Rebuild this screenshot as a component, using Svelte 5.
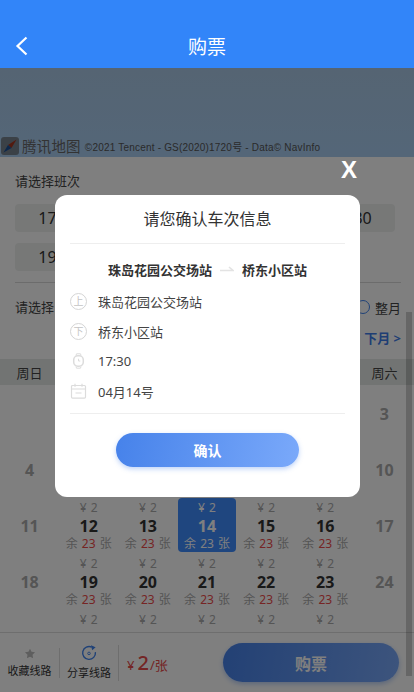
<script>
	const times = ['17:30', '18:00', '18:30', '18:30', '19:30'];
	const rows = [
		[null, null, null, null, 1, 2, 3],
		[4, 5, 6, 7, 8, 9, 10],
		[11, 12, 13, 14, 15, 16, 17],
		[18, 19, 20, 21, 22, 23, 24],
		[25, 26, 27, 28, 29, 30, null]
	];
	const weekdays = ['周日', '周一', '周二', '周三', '周四', '周五', '周六'];
	const isWeekend = (i) => i === 0 || i === 6;
</script>

<div class="page">
	<header class="top">
		<svg class="back" width="14" height="20" viewBox="0 0 14 20">
			<path d="M11.5 1.5 L2.5 10 L11.5 18.5" fill="none" stroke="#fff" stroke-width="2.2" />
		</svg>
		<h1>购票</h1>
	</header>

	<div class="map">
		<div class="map-logo">
			<svg width="18" height="18" viewBox="0 0 18 18">
				<rect width="18" height="18" rx="3" fill="#76838f" />
				<path d="M15.5 2.5 L10.5 11 L7 8 Z" fill="#a5341f" />
				<path d="M2.5 15.5 L7 8 L10.5 11 Z" fill="#1c4f94" />
			</svg>
			<span class="map-name">腾讯地图</span>
		</div>
		<span class="map-copy">©2021 Tencent - GS(2020)1720号 - Data© NavInfo</span>
	</div>

	<main class="content">
		<div class="section">
			<div class="label">请选择班次</div>
			<div class="times">
				{#each times as t}
					<div class="time">{t}</div>
				{/each}
			</div>
		</div>

		<div class="section date-head">
			<div class="date-row">
				<span class="label">请选择日期</span>
				<span class="month-check"><i class="radio"></i>整月</span>
			</div>
			<div class="next">下月 &gt;</div>
		</div>

		<div class="weekdays">
			{#each weekdays as w}
				<span>{w}</span>
			{/each}
		</div>

		<div class="calendar">
			{#each rows as row}
				{#each row as d, i}
					<div class="day" class:active={d === 14} class:rest={d && isWeekend(i)}>
						{#if d && !isWeekend(i)}
							<span class="price">¥ 2</span>
							<span class="num">{d}</span>
							<span class="left">余 <b>23</b> 张</span>
						{:else if d}
							<span class="num off">{d}</span>
						{/if}
					</div>
				{/each}
			{/each}
		</div>
	</main>

	<footer class="bar">
		<div class="tool tool-fav">
			<svg width="14" height="14" viewBox="0 0 24 24">
				<path d="M12 1.5 L15.4 8.4 L23 9.5 L17.5 14.9 L18.8 22.5 L12 18.9 L5.2 22.5 L6.5 14.9 L1 9.5 L8.6 8.4 Z" fill="#bdbdbd" />
			</svg>
			<span>收藏线路</span>
		</div>
		<div class="tool tool-share">
			<svg width="16" height="16" viewBox="0 0 16 16">
				<path d="M10.8 2.2 A6.4 6.4 0 1 0 14.4 7.2" fill="none" stroke="#3f83ee" stroke-width="1.4" />
				<circle cx="8" cy="8.4" r="1.3" fill="none" stroke="#3f83ee" stroke-width="0.9" />
				<path d="M10 0.3 L14.6 2.2 L11.2 5.2 Z" fill="#3f83ee" />
			</svg>
			<span>分享线路</span>
		</div>
		<div class="cost"><small>¥</small><strong>2</strong><em>/张</em></div>
		<button class="buy">购票</button>
	</footer>

	<div class="scrollbar"></div>

	<div class="mask">
		<span class="close">X</span>
		<div class="modal">
			<h2>请您确认车次信息</h2>
			<div class="route">
				<span>珠岛花园公交场站</span>
				<svg width="14" height="8" viewBox="0 0 14 8">
					<path d="M0 5.5 H13 L9 2" fill="none" stroke="#e3e3e3" stroke-width="1.6" />
				</svg>
				<span>桥东小区站</span>
			</div>
			<ul class="info">
				<li><i class="ring">上</i>珠岛花园公交场站</li>
				<li><i class="ring">下</i>桥东小区站</li>
				<li>
					<svg class="ico" width="16" height="16" viewBox="0 0 16 16" fill="none" stroke="#dcdcdc">
						<rect x="3.2" y="2.8" width="9.6" height="10.4" rx="4.2" stroke-width="1.5" />
						<path d="M5.5 2.5 L6 0.8 H10 L10.5 2.5 M5.5 13.5 L6 15.2 H10 L10.5 13.5" stroke-width="1" />
						<path d="M8 5.8 V8 H9.8" stroke-width="1" />
					</svg>
					17:30
				</li>
				<li>
					<svg class="ico" width="16" height="16" viewBox="0 0 16 16" fill="none" stroke="#dcdcdc" stroke-width="1.2">
						<rect x="1" y="2.5" width="14" height="12.6" rx="1" />
						<path d="M1 6 H15 M4.5 0.8 V3.8 M11.5 0.8 V3.8 M5 10 H11" />
					</svg>
					04月14号
				</li>
			</ul>
			<div class="actions">
				<button class="ok">确认</button>
			</div>
		</div>
	</div>
</div>

<style>
	:global(body) {
		margin: 0;
	}
	.page {
		position: relative;
		width: 414px;
		height: 692px;
		overflow: hidden;
		display: flex;
		flex-direction: column;
		background: #fff;
		font-family: 'Noto Sans', 'Noto Sans CJK SC', sans-serif;
		color: #555;
	}
	.top {
		position: relative;
		z-index: 3;
		flex: none;
		height: 44px;
		padding-top: 24px;
		display: flex;
		align-items: center;
		justify-content: center;
		background: #3285f9;
	}
	.top h1 {
		margin: 0;
		font-size: 19px;
		font-weight: 400;
		color: #fff;
	}
	.back {
		position: absolute;
		left: 15px;
		top: 36px;
	}
	.map {
		flex: none;
		height: 89px;
		box-sizing: border-box;
		padding: 0 0 2px 1px;
		display: flex;
		align-items: flex-end;
		gap: 4px;
		background: linear-gradient(#aac9e6, #a9cdf1);
	}
	.map-logo {
		display: flex;
		align-items: center;
		gap: 3px;
	}
	.map-name {
		font-size: 14.5px;
		line-height: 17px;
		color: #666;
		letter-spacing: 0.2px;
	}
	.map-copy {
		font-family: 'Liberation Sans', 'Noto Sans CJK SC', sans-serif;
		font-size: 10px;
		line-height: 14px;
		letter-spacing: 0.2px;
		color: #555;
	}
	.content {
		flex: 1;
		min-height: 0;
		overflow: hidden;
	}
	.section {
		padding: 0 15px;
	}
	.label {
		font-size: 13px;
		line-height: 20px;
		color: #444;
	}
	.section:first-child {
		padding-top: 14px;
	}
	.section:first-child .label {
		margin-bottom: 13px;
	}
	.times {
		display: grid;
		grid-template-columns: repeat(4, 87.5px);
		gap: 11px 10px;
		padding-bottom: 11px;
		margin-right: -2px;
		border-bottom: 1px solid #d9d9d9;
	}
	.time {
		height: 28px;
		line-height: 28px;
		border-radius: 4px;
		text-align: center;
		font-size: 16px;
		color: #333;
		background: #eef1ef;
	}
	.date-head {
		padding-top: 14px;
		padding-right: 13px;
	}
	.date-row {
		display: flex;
		justify-content: space-between;
		align-items: center;
		height: 20px;
	}
	.month-check {
		display: flex;
		align-items: center;
		gap: 5px;
		font-size: 13px;
		color: #444;
	}
	.radio {
		width: 12px;
		height: 12px;
		border: 1px solid #3f83ee;
		border-radius: 50%;
	}
	.next {
		margin-top: 11px;
		height: 20px;
		line-height: 20px;
		text-align: right;
		font-size: 13px;
		font-weight: 700;
		color: #3f7de8;
	}
	.weekdays {
		margin-top: 11px;
		height: 26px;
		display: grid;
		grid-template-columns: repeat(7, 1fr);
		align-items: center;
		text-align: center;
		font-size: 13px;
		color: #444;
		background: #e4e9e6;
	}
	.calendar {
		margin-top: 1px;
		display: grid;
		grid-template-columns: repeat(7, 1fr);
		grid-auto-rows: 56px;
	}
	.day {
		height: 54px;
		display: flex;
		flex-direction: column;
		align-items: center;
		justify-content: flex-start;
		border-radius: 4px;
		margin: 0 1px;
	}
	.day.rest {
		justify-content: center;
		padding-top: 2px;
		box-sizing: border-box;
	}
	.price,
	.left {
		font-size: 12px;
		line-height: 17px;
		color: #aaa;
		white-space: nowrap;
		word-spacing: 1px;
	}
	.price {
		line-height: 19px;
	}
	.left b {
		font-weight: 400;
		color: #ec4a4a;
	}
	.num {
		font-size: 16px;
		line-height: 18px;
		font-weight: 700;
		color: #333;
	}
	.num.off {
		color: #aaa;
	}
	.active {
		background: #3e8cfe;
	}
	.active .price,
	.active .left,
	.active .left b,
	.active .num {
		color: #fff;
	}
	.bar {
		flex: none;
		height: 60px;
		display: flex;
		align-items: center;
		box-sizing: border-box;
		border-top: 1px solid #ddd;
		background: #fff;
		padding-right: 15px;
	}
	.tool {
		box-sizing: border-box;
		display: flex;
		flex-direction: column;
		align-items: center;
		justify-content: center;
		font-size: 11px;
		line-height: 15px;
		color: #333;
		white-space: nowrap;
		border-right: 1px solid #ddd;
	}
	.tool svg {
		margin-bottom: 4px;
	}
	.tool-fav {
		width: 60px;
		height: 30px;
	}
	.tool-share {
		width: 59px;
		height: 36px;
	}
	.cost {
		margin-left: 8px;
		flex: 1;
		color: #e84a4a;
		display: flex;
		align-items: baseline;
	}
	.cost small {
		font-size: 13px;
		margin-right: 3px;
	}
	.cost strong {
		font-size: 20px;
		font-weight: 500;
	}
	.cost em {
		font-style: normal;
		font-size: 13px;
		margin-left: 1px;
	}
	.buy {
		width: 176px;
		height: 39px;
		border: none;
		border-radius: 20px;
		font: inherit;
		font-size: 16px;
		font-weight: 700;
		color: #fff;
		background: linear-gradient(100deg, #4682ea, #7aa9fa);
		box-shadow: 0 2px 5px rgba(70, 130, 234, 0.4);
	}
	.scrollbar {
		position: absolute;
		left: 406px;
		top: 312px;
		width: 6px;
		height: 364px;
		background: rgba(0, 0, 0, 0.2);
	}
	.mask {
		position: absolute;
		inset: 0;
		z-index: 2;
		background: rgba(0, 0, 0, 0.5);
	}
	.close {
		position: absolute;
		left: 341px;
		top: 155px;
		font-family: 'Liberation Sans', sans-serif;
		font-size: 24px;
		line-height: 30px;
		font-weight: 700;
		color: #fff;
	}
	.modal {
		position: absolute;
		left: 55px;
		top: 195px;
		width: 305px;
		height: 302px;
		box-sizing: border-box;
		padding: 0 15px;
		background: #fff;
		border-radius: 12px;
	}
	.modal h2 {
		margin: 0;
		height: 48px;
		line-height: 48px;
		border-bottom: 1px solid #eee;
		text-align: center;
		font-size: 16px;
		font-weight: 400;
		color: #333;
	}
	.route {
		margin-top: 15px;
		height: 20px;
		display: flex;
		align-items: center;
		justify-content: center;
		gap: 8px;
		font-size: 13px;
		font-weight: 700;
		color: #333;
	}
	.info {
		list-style: none;
		margin: 7px 0 0;
		padding: 0 0 7px;
		border-bottom: 1px solid #eee;
	}
	.info li {
		height: 30px;
		display: flex;
		align-items: center;
		gap: 11px;
		font-size: 13px;
		color: #444;
	}
	.ring {
		flex: none;
		box-sizing: border-box;
		width: 17px;
		height: 17px;
		border: 1px solid #d5d5d5;
		border-radius: 50%;
		font-style: normal;
		font-size: 10px;
		line-height: 15px;
		text-align: center;
		color: #c4c4c4;
	}
	.ico {
		flex: none;
		width: 17px;
	}
	.actions {
		margin-top: 19px;
		display: flex;
		justify-content: center;
	}
	.ok {
		width: 183px;
		height: 34px;
		border: none;
		border-radius: 17px;
		font: inherit;
		font-size: 14px;
		font-weight: 700;
		color: #fff;
		background: linear-gradient(100deg, #4682ea, #7aa9fa);
		box-shadow: 0 2px 5px rgba(70, 130, 234, 0.35);
	}
</style>
